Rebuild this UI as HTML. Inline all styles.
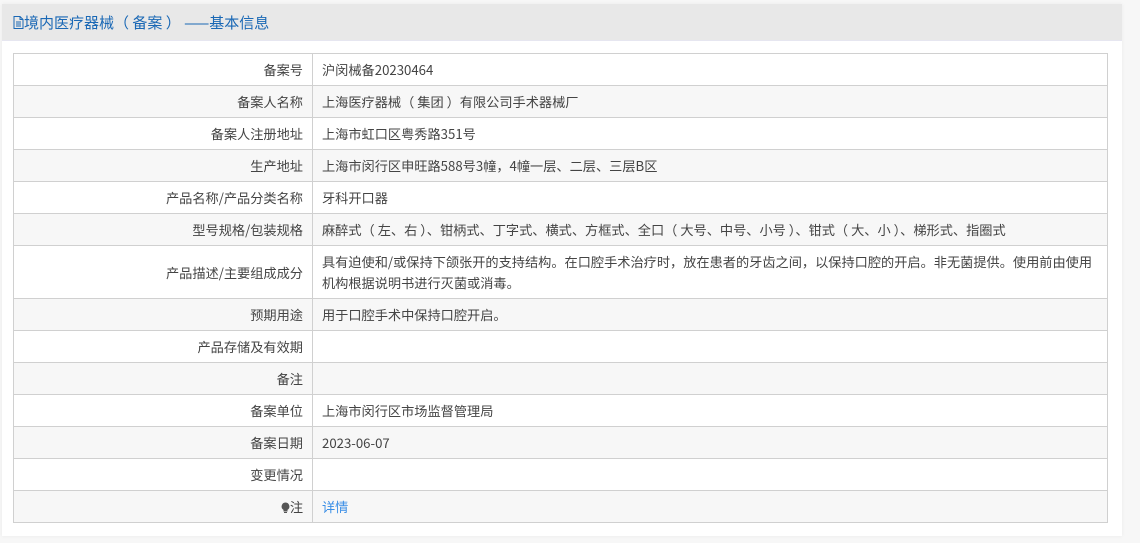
<!DOCTYPE html>
<html><head><meta charset="utf-8"><style>
body{margin:0;background:#f7f7f7;font-family:"Noto Sans CJK SC","Liberation Sans",sans-serif;width:1140px;height:543px;overflow:hidden}
.panel{position:absolute;left:2px;top:4px;width:1120px;height:532px;background:#fff;box-shadow:0 0 4px rgba(0,0,0,.06)}
.hd{height:36px;background:#e8e8e8;border-bottom:1px solid #e6e6f0;color:#1a68b5;font-size:15px;line-height:38px;padding-left:11px}
table{position:absolute;left:11px;top:49px;width:1095px;border-collapse:collapse;font-size:13.2px;color:#444}
td{border:1px solid #d0d0d0;height:31px;padding:0 9px;line-height:21px}
td.c{padding-right:12px}
td.l{width:280px;text-align:right}
tr:nth-child(even){background:#f7f7f7}
a{color:#3a8ee6;text-decoration:none}
</style></head><body>
<div class="panel"><div class="hd"><svg width="11" height="13" viewBox="0 0 11 13" style="vertical-align:-1px"><path d="M1 .5h6l3 3v9H1z M7 .5v3h3 M3 6h5 M3 8h5 M3 10h5" fill="none" stroke="#1a68b5"/></svg>境内医疗器械（ 备案 ） ——基本信息</div>
<table>
<tr><td class="l">备案号</td><td>沪闵械备20230464</td></tr>
<tr><td class="l">备案人名称</td><td>上海医疗器械（ 集团 ）有限公司手术器械厂</td></tr>
<tr><td class="l">备案人注册地址</td><td>上海市虹口区粤秀路351号</td></tr>
<tr><td class="l">生产地址</td><td>上海市闵行区申旺路588号3幢，4幢一层、二层、三层B区</td></tr>
<tr><td class="l">产品名称/产品分类名称</td><td>牙科开口器</td></tr>
<tr><td class="l">型号规格/包装规格</td><td>麻醉式（ 左、右 ）、钳柄式、丁字式、横式、方框式、全口（ 大号、中号、小号 ）、钳式（ 大、小 ）、梯形式、指圈式</td></tr>
<tr><td class="l" style="height:52px">产品描述/主要组成成分</td><td class="c">具有迫使和/或保持下颌张开的支持结构。在口腔手术治疗时，放在患者的牙齿之间，以保持口腔的开启。非无菌提供。使用前由使用<br>机构根据说明书进行灭菌或消毒。</td></tr>
<tr><td class="l">预期用途</td><td>用于口腔手术中保持口腔开启。</td></tr>
<tr><td class="l">产品存储及有效期</td><td></td></tr>
<tr><td class="l">备注</td><td></td></tr>
<tr><td class="l">备案单位</td><td>上海市闵行区市场监督管理局</td></tr>
<tr><td class="l">备案日期</td><td>2023-06-07</td></tr>
<tr><td class="l">变更情况</td><td></td></tr>
<tr><td class="l"><svg width="9" height="11" viewBox="0 0 9 11" style="vertical-align:-1px"><path d="M4.5 0.5a4 4 0 0 1 2 7.4v1.6h-4v-1.6a4 4 0 0 1 2-7.4z" fill="#555"/><rect x="3" y="10" width="3" height="1" fill="#555"/></svg>注</td><td><a>详情</a></td></tr>
</table></div>
</body></html>
